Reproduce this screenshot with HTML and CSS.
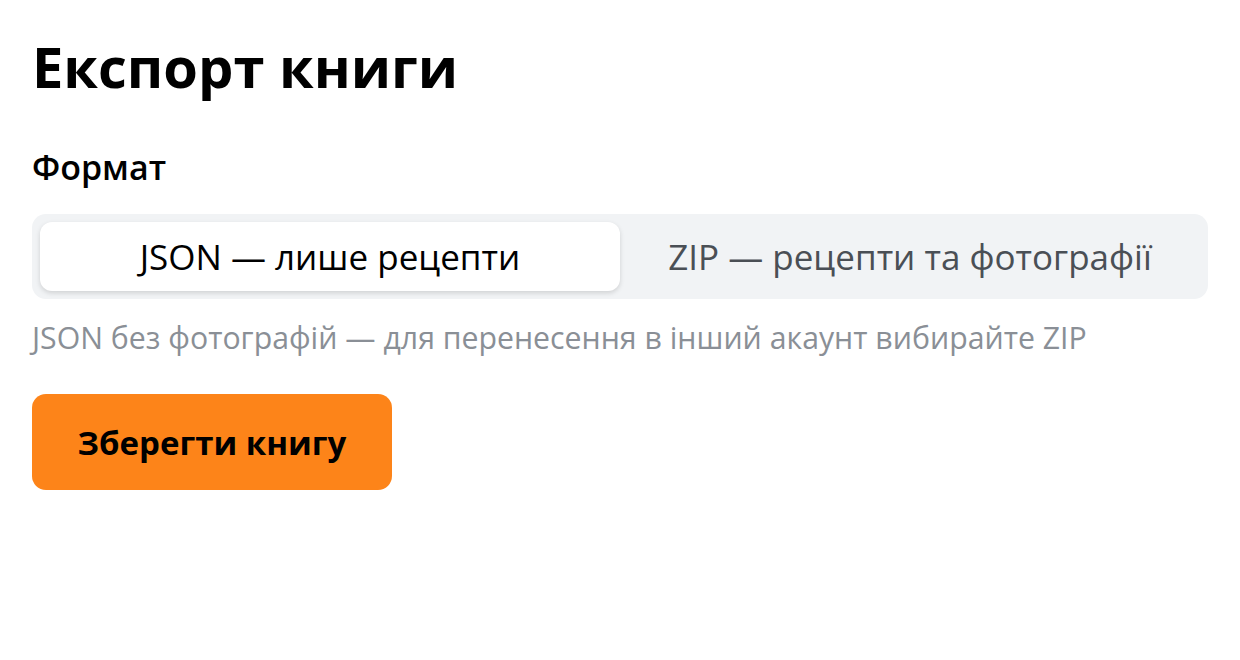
FILE: index.html
```html
<!DOCTYPE html>
<html lang="uk">
<head>
<meta charset="utf-8">
<title>Експорт книги</title>
<link rel="stylesheet" href="styles.css">
</head>
<body>
<main class="export">
  <h1 class="export__title">Експорт книги</h1>
  <section class="field">
    <h2 class="field__label">Формат</h2>
    <div class="segmented" role="radiogroup">
      <button class="segmented__option segmented__option--active" role="radio" aria-checked="true">JSON — лише рецепти</button>
      <button class="segmented__option" role="radio" aria-checked="false">ZIP — рецепти та фотографії</button>
    </div>
    <p class="field__hint">JSON без фотографій — для перенесення в інший акаунт вибирайте ZIP</p>
  </section>
  <button class="primary-btn">Зберегти книгу</button>
</main>
</body>
</html>
```

FILE: styles.css
```css
* {
  box-sizing: border-box;
}

html, body {
  margin: 0;
  background: #ffffff;
}

body {
  font-family: "Open Sans", "Noto Sans", sans-serif;
  color: #000000;
}

.export {
  padding: 26px 32px 32px;
  display: flex;
  flex-direction: column;
  align-items: flex-start;
}

.export__title {
  margin: 0;
  font-size: 56px;
  line-height: 80px;
  font-weight: 700;
}

.field {
  width: 100%;
  margin-top: 41px;
}

.field__label {
  margin: 0 0 27px;
  font-size: 34px;
  line-height: 40px;
  font-weight: 600;
}

.segmented {
  display: grid;
  grid-template-columns: 1fr 1fr;
  padding: 8px;
  background: #f1f3f5;
  border-radius: 14px;
}

.segmented__option {
  font: inherit;
  font-size: 35px;
  line-height: 44px;
  height: 69px;
  padding: 0;
  border: 0;
  border-radius: 12px;
  background: transparent;
  color: #4a4f55;
  cursor: pointer;
}

.segmented__option--active {
  background: #ffffff;
  color: #000000;
  box-shadow: 0 2px 5px rgba(0, 0, 0, 0.14);
}

.field__hint {
  margin: 21px 0 0;
  font-size: 30.25px;
  line-height: 36px;
  color: #8a8f96;
}

.primary-btn {
  margin-top: 38px;
  width: 360px;
  height: 96px;
  border: 0;
  border-radius: 14px;
  background: #fd8419;
  color: #000000;
  font: inherit;
  font-size: 33px;
  font-weight: 700;
  cursor: pointer;
}
```
